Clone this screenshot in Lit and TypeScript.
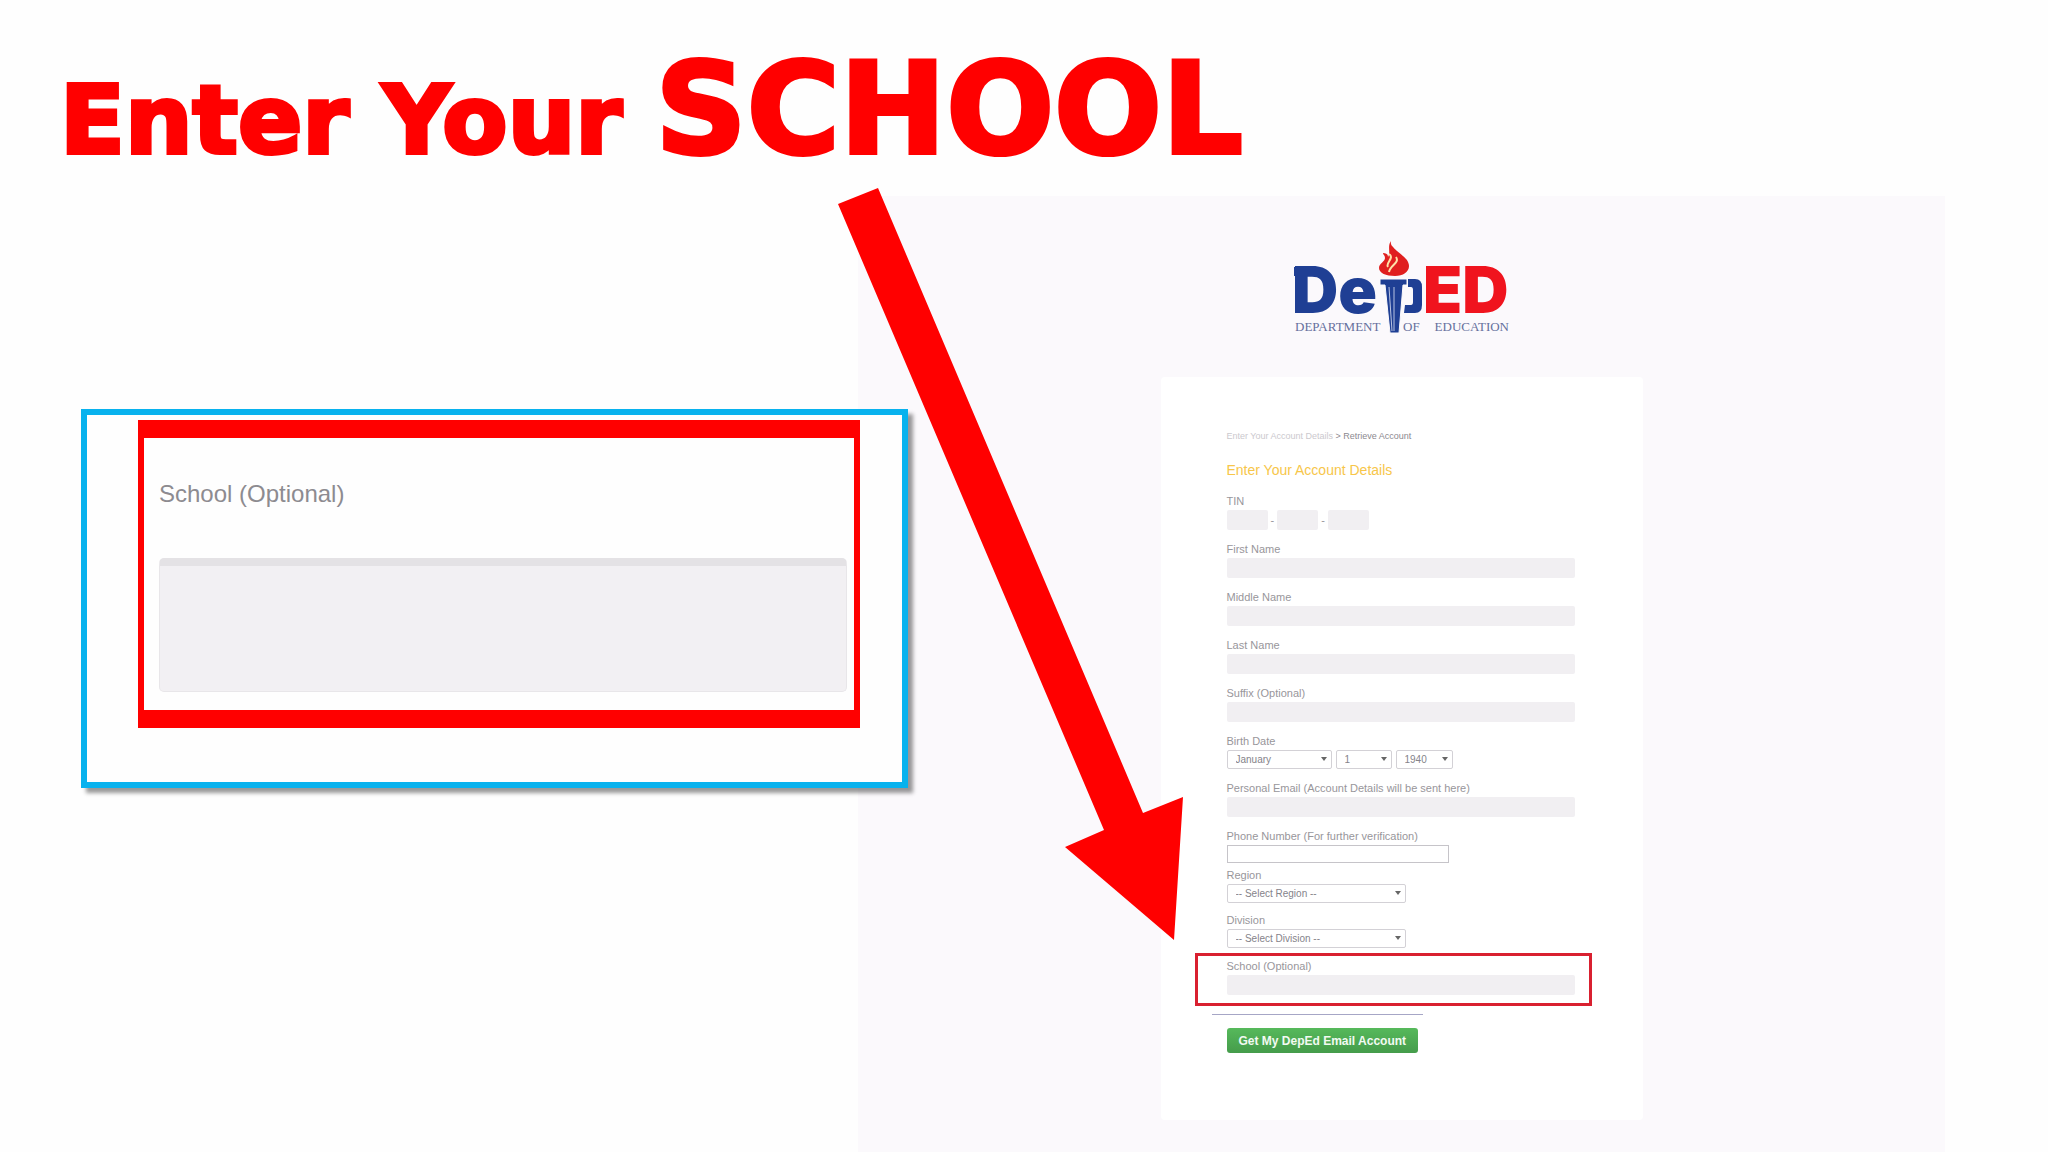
import { LitElement, html, css } from "lit";
import { customElement } from "lit/decorators.js";

interface TextField {
  id: string;
  label: string;
}

const NAME_FIELDS: TextField[] = [
  { id: "first-name", label: "First Name" },
  { id: "middle-name", label: "Middle Name" },
  { id: "last-name", label: "Last Name" },
  { id: "suffix", label: "Suffix (Optional)" },
];

@customElement("deped-logo")
class DepedLogo extends LitElement {
  static styles = css`
    :host {
      display: block;
    }
    .logo {
      display: block;
      overflow: visible;
    }
    .word {
      font: 900 64px Inter, "Arial Black", sans-serif;
    }
    .caption {
      font: 13px "Liberation Serif", serif;
      fill: #66709c;
    }
  `;

  render() {
    return html`
      <svg class="logo" width="216" height="96" viewBox="22 20 216 96" role="img" aria-label="DepED Department of Education">
        <text class="word" x="20" y="93" fill="#1f3f94">De</text>
        <text class="word" x="151" y="93" fill="#f0141e">ED</text>
        <path d="M22 47h12v9h-12z" fill="#1f3f94" />
        <path d="M108 59h27v6h-4l-4 48h-9l-5-48h-5z" fill="#1f3f94" stroke="#fbfafc" stroke-width="1" />
        <path d="M117 67l3 44M122 67v44" stroke="#b9c4e2" stroke-width="1" fill="none" />
        <path d="M136 59h7q7 0 7 8v18q0 8-7 8h-11l1-8h6q2 0 2-3v-12q0-3-2-3h-3z" fill="#1f3f94" />
        <path
          d="M119 21c-1 4 2 6 6 10 6 5 12 9 12 15 0 6-6 10-14 10-9 0-16-3-16-8 0-5 6-6 6-10 0-3-2-3-2-5 3 0 5 1 5 4 3-4-1-11 3-16z"
          fill="#e01f1f"
        />
        <path d="M117 34c6 4-4 9-1 13M124 37c4 6-6 8-7 15" fill="none" stroke="#ffe2a8" stroke-width="2" />
        <text class="caption" x="23" y="111">DEPARTMENT</text>
        <text class="caption" x="131" y="111">OF</text>
        <text class="caption" x="237" y="111" text-anchor="end">EDUCATION</text>
      </svg>
    `;
  }
}

@customElement("account-form")
class AccountForm extends LitElement {
  static styles = css`
    :host {
      display: block;
      font-family: "Liberation Sans", Arial, sans-serif;
    }
    .card {
      box-sizing: border-box;
      background: #fff;
      border-radius: 4px;
      padding: 52px 68px 67px 66px;
      color: #98969b;
      font-size: 11px;
    }
    .crumbs {
      font-size: 9px;
      line-height: 14px;
      color: #8b898f;
    }
    .crumbs a {
      color: #cbc9ce;
      text-decoration: none;
    }
    .title {
      margin: 17px 0 12px;
      font-size: 14px;
      line-height: 20px;
      font-weight: 400;
      color: #f7c64a;
    }
    .group {
      border: 0;
      margin: 0;
      padding: 0;
      min-width: 0;
    }
    .field {
      margin-bottom: 10px;
    }
    .near {
      margin-bottom: 8px;
    }
    .tight {
      margin-bottom: 3px;
    }
    .label {
      display: block;
      padding: 0;
      line-height: 18px;
      font-size: 11px;
    }
    .box {
      display: block;
      box-sizing: border-box;
      width: 100%;
      height: 20px;
      border: 0;
      border-radius: 2px;
      background: #f1eff2;
      color: #77757b;
      font: inherit;
    }
    .row {
      display: flex;
      align-items: center;
      gap: 3px;
    }
    .row .box {
      width: 41px;
    }
    .dates {
      display: flex;
      gap: 4px;
    }
    .month {
      width: 105px;
    }
    .day {
      width: 56px;
    }
    .year {
      width: 57px;
    }
    .phone {
      display: block;
      box-sizing: border-box;
      width: 222px;
      height: 18px;
      border: 1px solid #c6c4c9;
      background: #fff;
    }
    .pick {
      position: relative;
      display: block;
    }
    .pick::after {
      content: "";
      position: absolute;
      right: 5px;
      top: 7px;
      border: 3px solid transparent;
      border-top: 4px solid #666;
      border-bottom: 0;
    }
    .wide {
      width: 179px;
    }
    .select {
      appearance: none;
      display: block;
      box-sizing: border-box;
      width: 100%;
      height: 19px;
      padding: 0 8px;
      border: 1px solid #d3d1d6;
      border-radius: 2px;
      background: #fff;
      color: #85838a;
      font: inherit;
      font-size: 10px;
    }
    .marked {
      margin: 5px -17px 8px -32px;
      padding: 1px 14px 8px 29px;
      border: 3px solid #d92030;
    }
    .rule {
      width: 211px;
      margin: 0 0 13px -15px;
      border: 0;
      border-top: 1px solid #a6a6c6;
    }
    .submit {
      display: block;
      height: 25px;
      padding: 0 12px;
      min-width: 190px;
      border: 0;
      border-radius: 3px;
      background: linear-gradient(#56b95b, #459c4b);
      color: #f2faf2;
      font: bold 12px "Liberation Sans", Arial, sans-serif;
      white-space: nowrap;
    }
  `;

  private textField(field: TextField, type = "text") {
    return html`
      <div class="field">
        <label class="label" for=${field.id}>${field.label}</label>
        <input class="box" id=${field.id} type=${type} />
      </div>
    `;
  }

  render() {
    return html`
      <form class="card">
        <nav class="crumbs"><a href="#details">Enter Your Account Details</a> &gt; Retrieve Account</nav>
        <h2 class="title">Enter Your Account Details</h2>
        <fieldset class="group field">
          <legend class="label">TIN</legend>
          <div class="row">
            <input class="box" aria-label="TIN part 1" />-<input class="box" aria-label="TIN part 2" />-<input
              class="box"
              aria-label="TIN part 3"
            />
          </div>
        </fieldset>
        ${NAME_FIELDS.map((f) => this.textField(f))}
        <fieldset class="group field">
          <legend class="label">Birth Date</legend>
          <div class="dates">
            <span class="pick month"><select class="select" aria-label="Month"><option>January</option></select></span>
            <span class="pick day"><select class="select" aria-label="Day"><option>1</option></select></span>
            <span class="pick year"><select class="select" aria-label="Year"><option>1940</option></select></span>
          </div>
        </fieldset>
        ${this.textField({ id: "email", label: "Personal Email (Account Details will be sent here)" }, "email")}
        <div class="field tight">
          <label class="label" for="phone">Phone Number (For further verification)</label>
          <input class="phone" id="phone" type="tel" />
        </div>
        <div class="field near">
          <label class="label" for="region">Region</label>
          <span class="pick wide"><select class="select" id="region"><option>-- Select Region --</option></select></span>
        </div>
        <div class="field tight">
          <label class="label" for="division">Division</label>
          <span class="pick wide"><select class="select" id="division"><option>-- Select Division --</option></select></span>
        </div>
        <div class="marked">
          <label class="label" for="school">School (Optional)</label>
          <input class="box" id="school" />
        </div>
        <hr class="rule" />
        <button class="submit" type="button">Get My DepEd Email Account</button>
      </form>
    `;
  }
}

@customElement("app-root")
class AppRoot extends LitElement {
  static styles = css`
    :host {
      display: block;
    }
    .slide {
      position: relative;
      display: grid;
      grid-template-rows: auto 1fr;
      min-height: 100vh;
      background: #fefefe;
      overflow: hidden;
    }
    .heading {
      box-sizing: border-box;
      height: 196px;
      margin: 0;
      padding: 32px 60px 0;
      font: bold 95px/154px "DejaVu Sans", "Arial Black", sans-serif;
      -webkit-text-stroke: 4px #f00;
      color: #f00;
      white-space: nowrap;
    }
    .big {
      font-size: 127px;
    }
    .body {
      display: grid;
      grid-template-columns: 858fr 1087fr 103fr;
    }
    .callout {
      z-index: 1;
      align-self: start;
      margin: 213px -50px 0 81px;
      padding: 5px 42px 54px 51px;
      border: 6px solid #08b2ee;
      background: #fefefe;
      box-shadow: 5px 5px 4px rgba(0, 0, 0, 0.4);
    }
    .focus {
      padding: 24px 7px 18px 15px;
      border: solid #f00;
      border-width: 18px 6px;
      font-family: "Liberation Sans Narrow", "Arial Narrow", "Liberation Sans", sans-serif;
      color: #8d8b90;
    }
    .caption {
      display: block;
      font-size: 24px;
      line-height: 64px;
      margin-bottom: 32px;
    }
    .entry {
      display: block;
      box-sizing: border-box;
      width: 100%;
      height: 134px;
      border: 1px solid #e8e6e9;
      border-top: 8px solid #e4e2e5;
      border-radius: 5px;
      background: #f2f0f3;
      font: inherit;
      font-size: 24px;
    }
    .panel {
      display: flex;
      flex-direction: column;
      align-items: center;
      background: #fbf9fc;
      padding: 44px 0 33px;
    }
    .form {
      width: 482px;
      margin-top: 41px;
    }
    .arrow {
      position: absolute;
      z-index: 2;
      left: 838px;
      top: 188px;
    }
  `;

  render() {
    return html`
      <main class="slide">
        <h1 class="heading">Enter Your <span class="big">SCHOOL</span></h1>
        <div class="body">
          <section class="callout">
            <div class="focus">
              <label class="caption" for="school-zoom">School (Optional)</label>
              <input class="entry" id="school-zoom" />
            </div>
          </section>
          <section class="panel">
            <deped-logo></deped-logo>
            <account-form class="form"></account-form>
          </section>
        </div>
        <svg class="arrow" width="346" height="752" viewBox="838 188 346 752" aria-hidden="true">
          <path d="M838 204L878 188L1143 813L1183 797L1174 940L1065 847L1104 830Z" fill="#f00" />
        </svg>
      </main>
    `;
  }
}
